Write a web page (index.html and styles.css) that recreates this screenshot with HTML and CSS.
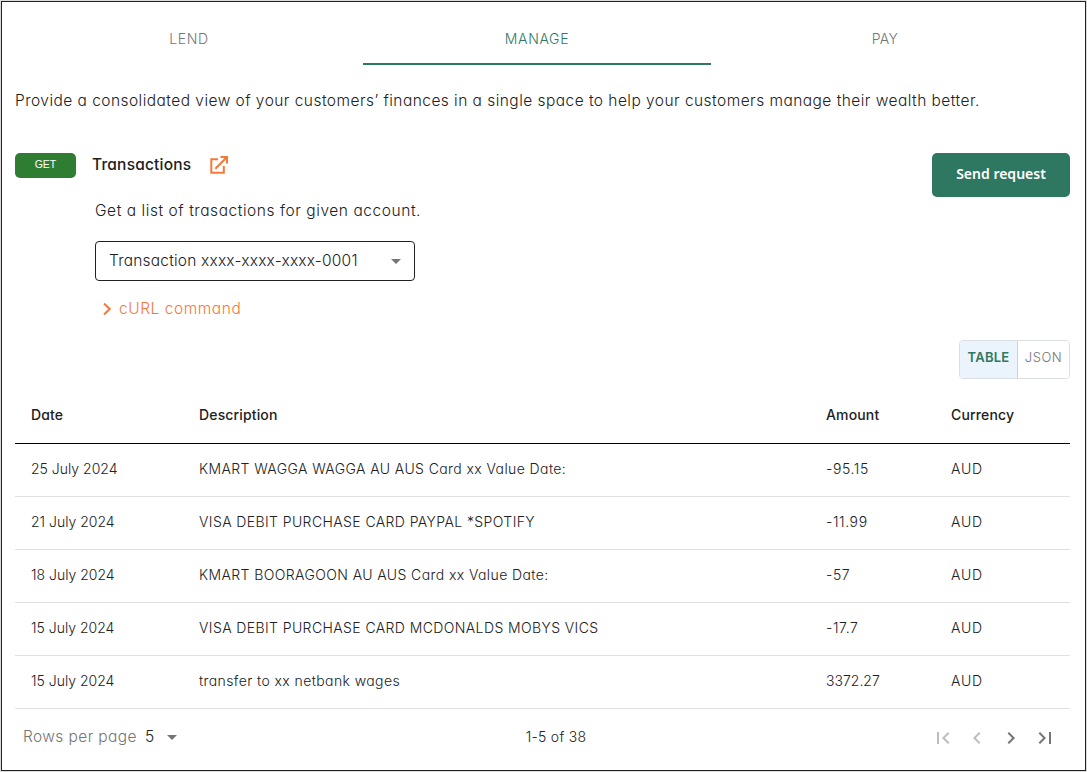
FILE: index.html
```html
<!DOCTYPE html>
<html lang="en">
<head>
<meta charset="utf-8">
<title>Transactions</title>
<link rel="stylesheet" href="styles.css">
</head>
<body>
<main class="frame">
  <nav class="tabs">
    <a class="tab"><span>LEND</span></a>
    <a class="tab active"><span>MANAGE</span></a>
    <a class="tab"><span>PAY</span></a>
  </nav>
  <p class="intro">Provide a consolidated view of your customers’ finances in a single space to help your customers manage their wealth better.</p>
  <section class="endpoint">
    <span class="method">GET</span>
    <div class="details">
      <h2 class="title"><span>Transactions</span>
        <svg class="open" viewBox="0 0 18 18" width="18" height="18" fill="none" stroke="#f5783b" stroke-width="2"><path d="M8 3.2H1.3v13.5h12.5V10M5.3 12.7 16.5 1.5M10.5 1H17v6.5"/></svg>
      </h2>
      <p class="summary">Get a list of trasactions for given account.</p>
      <div class="select"><span>Transaction xxxx-xxxx-xxxx-0001</span><i class="caret"></i></div>
      <div class="curl"><svg viewBox="0 0 8 12" width="8" height="12" fill="none" stroke="#f5783b" stroke-width="2"><path d="M1 .5 6.7 6 1 11.5"/></svg><span>cURL command</span></div>
    </div>
    <button class="send">Send request</button>
  </section>
  <div class="view">
    <div class="toggle"><button class="option on">TABLE</button><button class="option">JSON</button></div>
  </div>
  <div class="table">
    <div class="row head"><span>Date</span><span>Description</span><span>Amount</span><span>Currency</span></div>
    <div class="row"><span class="date">25 July 2024</span><span>KMART WAGGA WAGGA AU AUS Card xx Value Date:</span><span class="amount">-95.15</span><span class="code">AUD</span></div>
    <div class="row"><span class="date">21 July 2024</span><span>VISA DEBIT PURCHASE CARD PAYPAL *SPOTIFY</span><span class="amount">-11.99</span><span class="code">AUD</span></div>
    <div class="row"><span class="date">18 July 2024</span><span>KMART BOORAGOON AU AUS Card xx Value Date:</span><span class="amount">-57</span><span class="code">AUD</span></div>
    <div class="row"><span class="date">15 July 2024</span><span>VISA DEBIT PURCHASE CARD MCDONALDS MOBYS VICS</span><span class="amount">-17.7</span><span class="code">AUD</span></div>
    <div class="row"><span class="date">15 July 2024</span><span>transfer to xx netbank wages</span><span class="amount credit">3372.27</span><span class="code">AUD</span></div>
  </div>
  <footer class="pager">
    <div class="size"><span class="label">Rows per page</span><span class="count">5</span><i class="caret"></i></div>
    <span class="range">1-5 of 38</span>
    <div class="nav">
      <svg class="off" viewBox="0 0 24 24"><path d="M18.41 16.59L13.82 12l4.59-4.59L17 6l-6 6 6 6zM6 6h2v12H6z"/></svg>
      <svg class="off" viewBox="0 0 24 24"><path d="M15.41 7.41L14 6l-6 6 6 6 1.41-1.41L10.83 12z"/></svg>
      <svg viewBox="0 0 24 24"><path d="M10 6L8.59 7.41 13.17 12l-4.58 4.59L10 18l6-6z"/></svg>
      <svg viewBox="0 0 24 24"><path d="M5.59 7.41L10.18 12l-4.59 4.59L7 18l6-6-6-6zM16 6h2v12h-2z"/></svg>
    </div>
  </footer>
</main>
</body>
</html>
```
FILE: styles.css
```css
* { box-sizing: border-box; margin: 0; }
body { background: #dcdcdc; padding: 1px; font: 300 15.5px/24px Inter, sans-serif; font-feature-settings: "cv11"; color: #212121; }
.frame { height: 770px; background: #fff; border: 1px solid #212121; padding: 11px 15px 0 13px; display: flex; flex-direction: column; }
.tabs { display: flex; height: 52px; }
.tab { width: 348px; display: flex; justify-content: center; padding-top: 14px; font-size: 14px; letter-spacing: .65px; color: #757575; border-bottom: 2px solid transparent; }
.tab:last-child { letter-spacing: .4px; }
.tab.active { color: #2e7862; border-color: #2e7862; }
.intro { padding-top: 24px; height: 88px; letter-spacing: .46px; white-space: nowrap; }
.endpoint { display: flex; align-items: flex-start; height: 187px; }
.method { width: 61px; height: 25px; border-radius: 5px; background: #2e7d32; color: #fff; font: 400 10.5px/23px "Liberation Sans", Arial, sans-serif; text-align: center; }
.details { flex: 1; padding-left: 19px; }
.title { display: flex; align-items: center; margin-left: -3px; height: 24px; font-size: 15.5px; letter-spacing: .2px; line-height: 24px; font-weight: 500; }
.open { margin-left: 19px; }
.summary { margin-top: 22px; letter-spacing: .56px; white-space: nowrap; }
.select { display: flex; align-items: center; justify-content: space-between; width: 320px; height: 40px; margin-top: 18px; padding: 0 13px; border: 1px solid #212121; border-radius: 4px; letter-spacing: .2px; white-space: nowrap; }
.caret { border: 5px solid transparent; border-top-color: #757575; border-bottom: 0; }
.curl { display: flex; align-items: center; gap: 8px; margin: 16px 0 0 8px; color: #f5783b; letter-spacing: .55px; }
.send { width: 138px; height: 44px; border: 0; border-radius: 5px; background: #2e7862; color: #fff; font: 600 14px/20px "Noto Sans", sans-serif; padding: 0 0 2px; }
.view { display: flex; justify-content: flex-end; height: 39px; }
.toggle { display: flex; width: 111px; border: 1px solid #dcdfe2; border-radius: 4px; overflow: hidden; }
.option { width: 51px; padding: 0 0 5px; border: 0; background: #fff; color: #757575; font: 300 13px/20px Inter, sans-serif; letter-spacing: .5px; }
.option.on { width: 58px; border-right: 1px solid #ccd3da; background: #ebf3fc; color: #2e7862; font-weight: 600; letter-spacing: .25px; }
.row { display: grid; grid-template-columns: 168px 627px 125px 1fr; align-items: center; height: 53px; padding: 0 0 2px 16px; border-bottom: 1px solid #e0e0e0; font-size: 14px; letter-spacing: .4px; white-space: nowrap; }
.row.head { height: 65px; padding: 7px 0 0 16px; border-color: #000; font-weight: 500; letter-spacing: .15px; }
.date { letter-spacing: 0; }
.amount { letter-spacing: .6px; }
.credit { letter-spacing: 0; }
.code { letter-spacing: .8px; }
.pager { display: grid; grid-template-columns: 1fr auto 1fr; align-items: center; height: 57px; }
.size { display: flex; align-items: center; padding-left: 8px; }
.size span { padding-bottom: 1px; }
.label { color: #757575; letter-spacing: .4px; }
.count { margin: 0 13px 0 8px; }
.range { padding: 0 0 1px 27px; font-size: 14px; letter-spacing: .25px; }
.nav { display: flex; justify-content: flex-end; gap: 10px; padding-right: 13px; }
.nav svg { width: 24px; height: 24px; fill: #757575; }
.nav .off { fill: #bdbdbd; }
```
